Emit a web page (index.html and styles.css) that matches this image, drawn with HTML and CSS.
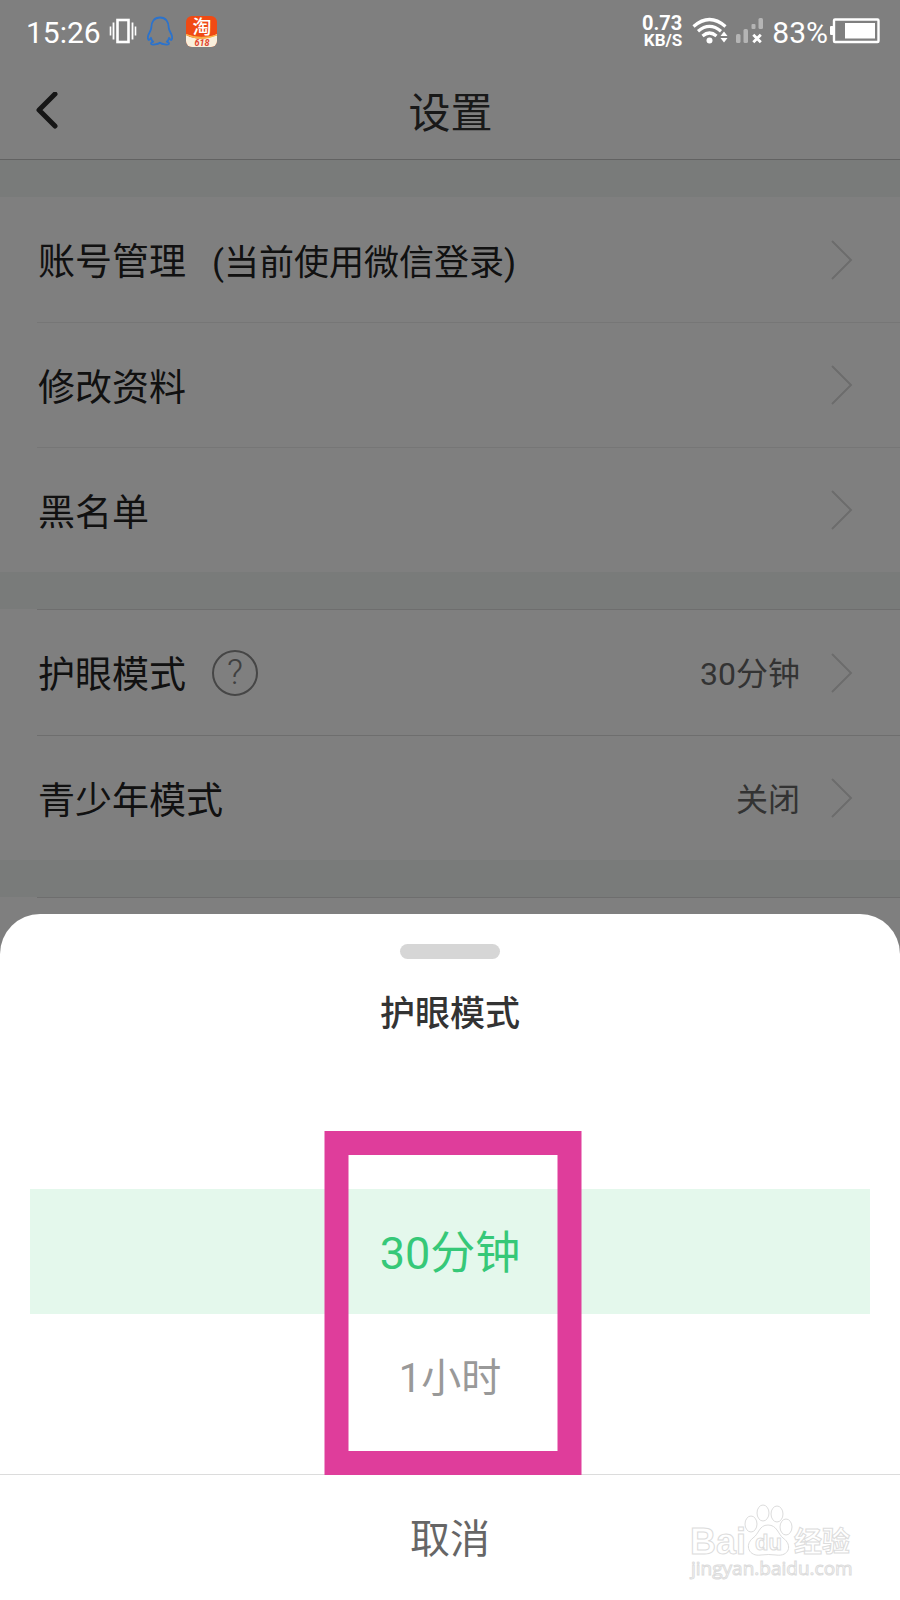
FILE: index.html
```html
<!DOCTYPE html>
<html lang="zh-CN">
<head>
<meta charset="utf-8">
<meta name="viewport" content="width=device-width, initial-scale=1">
<title>设置</title>
<link rel="stylesheet" href="styles.css">
</head>
<body>
<div class="screen">
  <div class="status-bar">
    <div class="status-left">
      <span class="clock">15:26</span>
      <svg class="icon-vibrate" width="28" height="26" viewBox="0 0 28 26" fill="none" stroke="#fff" aria-hidden="true">
        <rect x="8.500" y="2" width="11" height="22" stroke-width="2.600"/>
        <path d="M4.500 4.500v17M23.500 4.500v17" stroke-width="1.800"/>
        <path d="M1.500 8.500v9M26.500 8.500v9" stroke-width="1.600"/>
      </svg>
      <svg class="icon-qq" width="26" height="30" viewBox="0 0 26 30" fill="none" stroke="#2c73cc" stroke-width="1.800" stroke-linejoin="round" aria-hidden="true">
        <path d="M13 1.500C7 1.500 4.300 6 4.300 11.500C4.300 14 2 17 1.200 19.500C.5 22 1 24 1.800 24C2.700 24 3.300 22.500 4 21.800C4.300 23.500 5 24.700 6.200 25.600C4.500 26.200 3.800 27 4.200 28C5 29 11 28.500 13 26.800C15 28.500 21 29 21.800 28C22.200 27 21.500 26.200 19.800 25.600C21 24.700 21.700 23.500 22 21.800C22.700 22.500 23.300 24 24.200 24C25 24 25.500 22 24.800 19.500C24 17 21.700 14 21.700 11.500C21.700 6 19 1.500 13 1.500Z"/>
      </svg>
      <svg class="icon-taobao" width="32" height="31" viewBox="0 0 32 31" aria-hidden="true">
        <defs><clipPath id="tile"><rect width="31" height="31" rx="6"/></clipPath></defs>
        <g clip-path="url(#tile)">
          <rect width="31" height="31" fill="#f04a14"/>
          <path d="M0 19Q15 27 31 18V31H0Z" fill="#f9efdc"/>
          <path d="M0 18.500Q15 26 31 19Q15 24 0 18.500Z" fill="#fbb24a" stroke="#fbb24a"/>
        </g>
        <text class="tile-name" x="16" y="18" text-anchor="middle">淘</text>
        <text class="tile-sale" x="16" y="30" text-anchor="middle">618</text>
      </svg>
    </div>
    <div class="status-right">
      <span class="speed"><span class="speed-number">0.73</span><span class="speed-unit">KB/S</span></span>
      <svg class="icon-wifi" width="36" height="28" viewBox="0 0 36 28" fill="none" stroke="#fff" stroke-width="3.200" aria-hidden="true">
        <path d="M1.500 9.500Q17.500-4.500 33.500 9.500M6 14.300Q17.500 4.500 29 14.300M10.500 19Q17.500 13 24.500 19"/>
        <circle cx="17.500" cy="23.500" r="3" fill="#fff" stroke="none"/>
        <path d="M32 14.500l3.500 4.500h-7zM32 25.500l3.500-4.500h-7z" fill="#fff" stroke="none"/>
      </svg>
      <svg class="icon-signal" width="28" height="28" viewBox="0 0 28 28" aria-hidden="true">
        <g fill="#b5b5b5"><rect x="0" y="17" width="4.500" height="9" rx="1.500"/><rect x="7.500" y="12" width="4.500" height="14" rx="1.500"/><rect x="15.500" y="7" width="4" height="5" rx="1"/><rect x="22.500" y="1" width="4.500" height="11" rx="1.500"/></g>
        <path d="M17.300 17.800l7.500 7.500M24.800 17.800l-7.500 7.500" stroke="#fff" stroke-width="2.800"/>
      </svg>
      <span class="percent">83%</span>
      <svg class="icon-battery" width="50" height="26" viewBox="0 0 50 26" aria-hidden="true">
        <rect x="4" y="1.500" width="44.500" height="22.500" rx="1" fill="none" stroke="#fff" stroke-width="2.400"/>
        <rect x="0" y="8" width="3.500" height="9" rx="1" fill="#fff"/>
        <rect x="15" y="5" width="30" height="15.500" fill="#fff"/>
      </svg>
    </div>
  </div>

  <header class="nav">
    <button class="back" type="button" aria-label="返回">
      <svg width="24" height="38" viewBox="0 0 24 38" fill="none" stroke="#2c2c2c" stroke-width="5" stroke-linecap="round" stroke-linejoin="round" aria-hidden="true"><path d="M20 2L4 18L20 34"/></svg>
    </button>
    <h1 class="nav-title">设置</h1>
  </header>

  <main class="groups">
    <section class="group">
      <button class="row" type="button"><span class="label">账号管理</span><span class="note">(当前使用微信登录)</span><svg class="chevron" width="22" height="40" viewBox="0 0 22 40" aria-hidden="true"><path d="M1 1L20 20L1 39"/></svg></button>
      <button class="row" type="button"><span class="label">修改资料</span><svg class="chevron" width="22" height="40" viewBox="0 0 22 40" aria-hidden="true"><path d="M1 1L20 20L1 39"/></svg></button>
      <button class="row" type="button"><span class="label">黑名单</span><svg class="chevron" width="22" height="40" viewBox="0 0 22 40" aria-hidden="true"><path d="M1 1L20 20L1 39"/></svg></button>
    </section>
    <section class="group ruled">
      <button class="row" type="button"><span class="label">护眼模式</span><span class="help">?</span><span class="value">30分钟</span><svg class="chevron" width="22" height="40" viewBox="0 0 22 40" aria-hidden="true"><path d="M1 1L20 20L1 39"/></svg></button>
      <button class="row" type="button"><span class="label">青少年模式</span><span class="value">关闭</span><svg class="chevron" width="22" height="40" viewBox="0 0 22 40" aria-hidden="true"><path d="M1 1L20 20L1 39"/></svg></button>
    </section>
    <section class="group ruled rest"></section>
  </main>

  <div class="scrim"></div>

  <div class="sheet" role="dialog" aria-labelledby="sheet-title">
    <div class="handle"></div>
    <h2 class="sheet-title" id="sheet-title">护眼模式</h2>
    <div class="picker">
      <button class="option selected" type="button">30分钟</button>
      <button class="option" type="button">1小时</button>
      <div class="marker"></div>
    </div>
    <button class="cancel" type="button">取消</button>
    <svg class="watermark" width="164" height="84" viewBox="0 0 164 84" aria-hidden="true">
      <text class="mark-brand" x="0" y="50">Bai</text>
      <g class="mark-paw">
        <ellipse cx="61" cy="20" rx="6" ry="8"/><ellipse cx="73" cy="9" rx="6" ry="8"/><ellipse cx="87" cy="10" rx="6" ry="8"/><ellipse cx="96" cy="23" rx="6" ry="8"/>
        <path d="M78 21C69 21 69 30 63 34C54 41 59 53 71 51Q79 50 86 51C99 53 103 41 93 34C88 30 87 21 78 21Z"/>
      </g>
      <text class="mark-du" x="65" y="46">du</text>
      <text class="mark-cjk" x="104" y="48">经验</text>
      <text class="mark-url" x="1" y="71">jingyan.baidu.com</text>
    </svg>
  </div>
</div>
</body>
</html>
```
FILE: styles.css
```css
* { box-sizing: border-box; }

body {
  margin: 0;
  font-family: Roboto, "Noto Sans CJK SC", sans-serif;
  color: #222;
}

button {
  margin: 0;
  padding: 0;
  border: 0;
  background: none;
  font: inherit;
  color: inherit;
  cursor: pointer;
}

svg { display: block; flex: none; }

.screen {
  position: relative;
  display: flex;
  flex-direction: column;
  min-height: 100vh;
  overflow: hidden;
  background: #fff;
}

/* Status bar stays bright above the scrim */
.status-bar {
  position: relative;
  z-index: 1;
  display: flex;
  justify-content: space-between;
  align-items: center;
  height: 62px;
  padding: 0 20px 0 26px;
  color: #fff;
}

.status-left, .status-right { display: flex; align-items: center; }

.clock, .percent { font-size: 30px; line-height: 36px; }
.clock { padding-top: 4px; }
.percent { padding: 4px 2px 0 8px; }
.icon-vibrate { margin-left: 8px; }
.icon-qq { margin-left: 10px; }
.icon-taobao { margin-left: 13px; }
.icon-signal { margin-left: 8px; }
.icon-wifi { margin-left: 10px; }

.tile-name { font-size: 19px; font-weight: 500; fill: #fff; }
.tile-sale { font-size: 9px; font-weight: 700; font-style: italic; fill: #e0452e; }

.speed {
  display: flex;
  flex-direction: column;
  align-items: flex-end;
}

.speed-number { font-size: 20px; font-weight: 700; line-height: 18px; }
.speed-unit { font-size: 17px; font-weight: 700; line-height: 17px; }

.nav {
  display: flex;
  align-items: center;
  height: 98px;
  padding: 0 34px 0 35px;
  border-bottom: 1px solid #c4c4c4;
}

.nav-title {
  flex: 1;
  margin: 0 24px 0 0;
  padding-top: 6px;
  font-size: 42px;
  font-weight: 400;
  line-height: 60px;
  text-align: center;
  color: #333;
}

.groups {
  display: flex;
  flex: 1;
  flex-direction: column;
  gap: 37px;
  padding-top: 37px;
  background: #f2f6f4;
}

.group { background: #fff; }
.rest { flex: 1; }

.row {
  display: flex;
  align-items: center;
  width: calc(100% - 37px);
  height: 125px;
  margin-left: 37px;
  padding: 0 47px 0 1px;
  text-align: left;
}

.row + .row { border-top: 1px solid #ececec; }
.ruled .row + .row { border-top-color: #dcdcdc; }

.ruled::before {
  content: "";
  display: block;
  height: 1px;
  margin-left: 37px;
  background: #dcdcdc;
}

.label { padding-top: 7px; font-size: 37px; line-height: 54px; }
.note { margin-left: 26px; padding-top: 8px; font-size: 35px; line-height: 54px; }
.value { margin-left: auto; padding-top: 3px; font-size: 32px; line-height: 48px; color: #666; }
.chevron { margin-left: auto; fill: none; stroke: #d8d8d8; stroke-width: 2; }
.value + .chevron { margin-left: 31px; }

.help {
  width: 46px;
  height: 46px;
  margin-left: 26px;
  border: 2px solid #8c8c8c;
  border-radius: 50%;
  font-size: 35px;
  font-weight: 300;
  line-height: 42px;
  text-align: center;
  color: #808080;
}

.scrim {
  position: absolute;
  inset: 0;
  background: rgba(0, 0, 0, 0.5);
}

.sheet {
  position: absolute;
  right: 0;
  bottom: 0;
  left: 0;
  display: flex;
  flex-direction: column;
  padding-top: 30px;
  border-radius: 40px 40px 0 0;
  background: #fff;
}

.handle {
  align-self: center;
  width: 100px;
  height: 15px;
  border-radius: 8px;
  background: #d6d6d6;
}

.sheet-title {
  margin: 30px 0 0;
  font-size: 35px;
  font-weight: 500;
  line-height: 52px;
  text-align: center;
  color: #333;
}

.picker {
  position: relative;
  display: flex;
  flex-direction: column;
  padding: 148px 30px 35px;
}

.option {
  height: 125px;
  padding-bottom: 4px;
  font-size: 40px;
  color: #999;
}

.option.selected {
  font-size: 45px;
  color: #36c878;
  background: #e4f8ec;
}

.marker {
  position: absolute;
  top: 90px;
  bottom: -1px;
  left: calc(50% + 3px);
  width: 257px;
  border: 24px solid #df3d9b;
  transform: translateX(-50%);
  pointer-events: none;
}

.cancel {
  height: 126px;
  padding-bottom: 3px;
  border-top: 1px solid #dcdcdc;
  font-size: 40px;
  color: #666;
}

.watermark {
  position: absolute;
  right: 46px;
  bottom: 12px;
  overflow: visible;
  fill: #fff;
  stroke: #dcdcdc;
  stroke-width: 1;
}

.mark-brand { font: 700 36px "Liberation Sans", sans-serif; }
.mark-du { font: 700 22px "Liberation Sans", sans-serif; }
.mark-cjk { font: 700 28px "Noto Sans CJK SC", sans-serif; }
.mark-url { font: 400 19px "Open Sans", sans-serif; }
```
